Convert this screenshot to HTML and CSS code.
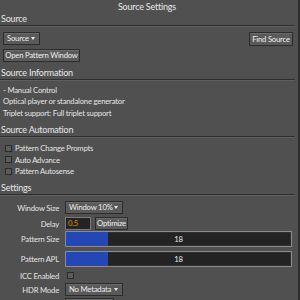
FILE: index.html
```html
<!DOCTYPE html>
<html>
<head>
<meta charset="utf-8">
<link rel="stylesheet" href="styles.css">
</head>
<body>
<div class="panel">
  <div class="title">Source Settings</div>

  <div class="hdr">Source</div>
  <div class="sep"></div>
  <div class="src-row">
    <div class="dropdown w-src">Source<span class="arrow"></span></div>
    <div class="btn find-btn">Find Source</div>
  </div>
  <div class="btn open-btn">Open Pattern Window</div>

  <div class="hdr hdr-info">Source Information</div>
  <div class="sep"></div>
  <div class="info">
    <div class="line">- Manual Control</div>
    <div class="line">Optical player or standalone generator</div>
    <div class="line triplet">Triplet support: Full triplet support</div>
  </div>

  <div class="hdr hdr-auto">Source Automation</div>
  <div class="sep"></div>
  <div class="checks">
    <div class="check"><span class="box"></span>Pattern Change Prompts</div>
    <div class="check"><span class="box"></span>Auto Advance</div>
    <div class="check"><span class="box"></span>Pattern Autosense</div>
  </div>

  <div class="hdr hdr-set">Settings</div>
  <div class="sep"></div>
  <div class="settings">
    <div class="lbl r-ws">Window Size</div>
    <div class="ctl r-ws"><div class="dropdown w-win">Window 10%<span class="arrow"></span></div></div>

    <div class="lbl r-delay">Delay</div>
    <div class="ctl r-delay"><div class="input">0.5</div><div class="btn opt-btn">Optimize</div></div>

    <div class="lbl r-slider">Pattern Size</div>
    <div class="ctl r-slider"><div class="slider"><div class="fill" style="width:18.5%"></div><span class="val">18</span></div></div>

    <div class="lbl r-slider2">Pattern APL</div>
    <div class="ctl r-slider2"><div class="slider"><div class="fill" style="width:18.5%"></div><span class="val">18</span></div></div>

    <div class="lbl r-icc">ICC Enabled</div>
    <div class="ctl r-icc"><span class="box"></span></div>

    <div class="lbl r-hdr">HDR Mode</div>
    <div class="ctl r-hdr"><div class="dropdown w-win">No Metadata<span class="arrow"></span></div></div>

    <div class="lbl r-next"></div>
    <div class="ctl r-next"><div class="dropdown w-next"></div></div>
  </div>
</div>
</body>
</html>
```

FILE: styles.css
```css
html, body {
  margin: 0;
  padding: 0;
  background: #505050;
  width: 300px;
  height: 300px;
  overflow: hidden;
}

.panel {
  width: 298px;
  height: 300px;
  background: #505050;
  border-right: 2px solid #2c2c2c;
  font-family: Lato, "Open Sans", sans-serif;
  font-size: 7.7px;
  letter-spacing: -0.2px;
  color: #e4e4e4;
  overflow: hidden;
}

.title {
  height: 13px;
  line-height: 14px;
  text-align: center;
  font-size: 9px;
  padding-right: 4px;
  color: #e8e8e8;
}

.hdr {
  height: 11px;
  line-height: 11px;
  font-size: 9px;
  padding-left: 1px;
  color: #e8e8e8;
}
.hdr-info { margin-top: 5px; }
.hdr-auto { margin-top: 5px; }
.hdr-set { margin-top: 5px; }

.sep {
  margin-top: 1px;
  margin-right: 3px;
  height: 1px;
  background: #2f2f2f;
  border-bottom: 1px solid #5e5e5e;
}

.src-row {
  display: flex;
  justify-content: space-between;
  align-items: flex-start;
  margin-top: 5px;
  padding: 0 5px 0 3px;
}

.dropdown {
  position: relative;
  box-sizing: border-box;
  height: 13px;
  line-height: 11px;
  padding-left: 3px;
  background: #5a5a5a;
  border: 1px solid #2c2c2c;
  box-shadow: inset 0 1px 0 #6a6a6a;
  color: #ececec;
  white-space: nowrap;
}
.arrow {
  position: absolute;
  right: 4px;
  top: 4px;
  width: 0;
  height: 0;
  border-left: 2.5px solid transparent;
  border-right: 2.5px solid transparent;
  border-top: 3px solid #e8e8e8;
}
.w-src { width: 37px; }
.w-win { width: 58px; }
.w-next { width: 49px; }

.btn {
  box-sizing: border-box;
  height: 14px;
  line-height: 12px;
  padding: 0 3px;
  background: #5a5a5a;
  border: 1px solid #2c2c2c;
  box-shadow: inset 0 1px 0 #6c6c6c;
  color: #f0f0f0;
  white-space: nowrap;
  text-align: center;
}
.find-btn { width: 44px; padding: 0; }
.open-btn {
  width: 77px;
  margin: 3px 0 0 3px;
  height: 13px;
  line-height: 11px;
  padding: 0;
}

.info {
  padding-left: 3px;
  margin-top: 4px;
}
.line { height: 10.5px; line-height: 10.5px; }
.triplet { margin-top: 2px; }

.checks {
  margin-top: 5px;
  padding-left: 5px;
}
.check {
  display: flex;
  align-items: center;
  height: 11.5px;
}
.box {
  display: inline-block;
  box-sizing: border-box;
  width: 7px;
  height: 7px;
  background: #5c5c5c;
  border: 1px solid #2a2a2a;
  margin-right: 3px;
  flex: none;
}

.settings {
  display: grid;
  grid-template-columns: 59px 1fr;
  column-gap: 6px;
  margin-top: 4px;
}
.lbl {
  display: flex;
  align-items: center;
  justify-content: flex-end;
  white-space: nowrap;
}
.ctl {
  display: flex;
  align-items: center;
  gap: 4px;
  padding-right: 6px;
}
.r-ws { height: 13px; margin-top: 1px; }
.r-delay { height: 13px; margin-top: 3px; }
.r-slider { height: 16px; margin-top: 1px; }
.r-slider2 { height: 16px; margin-top: 4px; }
.r-icc { height: 11px; margin-top: 3px; }
.r-icc .box { margin-left: 2px; }
.r-hdr { height: 13px; margin-top: 2px; }
.r-next { height: 13px; margin-top: 2px; align-items: flex-start; }

.input {
  box-sizing: border-box;
  width: 26px;
  height: 13px;
  line-height: 11px;
  padding-left: 2px;
  background: #242424;
  border: 1px solid #7a7a7a;
  color: #e08c00;
}
.opt-btn { width: 33px; height: 13px; line-height: 11px; padding: 0; }

.slider {
  position: relative;
  box-sizing: border-box;
  flex: 1;
  height: 16px;
  background: #232323;
  border: 1px solid #8c8c8c;
  box-shadow: inset 0 0 0 1px #2e2e2e;
}
.fill {
  height: 100%;
  background: #2347b4;
}
.val {
  position: absolute;
  left: 0;
  right: 0;
  top: 0;
  line-height: 14px;
  text-align: center;
  color: #e8e8e8;
}
```
